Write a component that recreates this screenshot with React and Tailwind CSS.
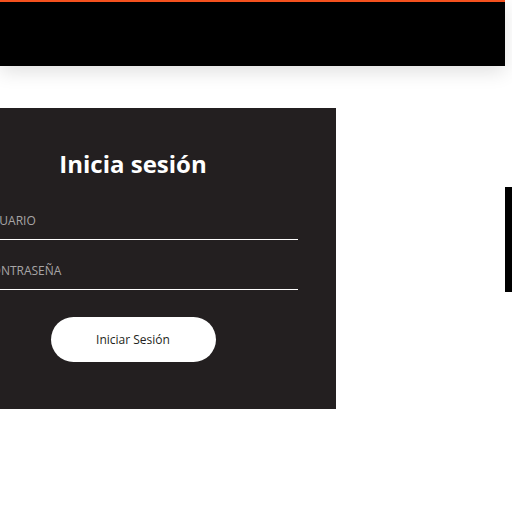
import React from 'react';

const Field = ({ label }) => (
  <div className="h-[50px] flex items-end border-b border-white pb-[11px]">
    <span className="pl-[16px] text-[12px] leading-[14px] text-[#a7a5a6]">{label}</span>
  </div>
);

export default function App() {
  return (
    <div className="relative w-[512px] h-[511px] overflow-hidden bg-white" style={{ fontFamily: '"Open Sans", Lato, sans-serif' }}>
      {/* Header */}
      <header className="w-[505px] h-[66px] bg-black border-t-2 border-[#f4511e] shadow-[0_6px_18px_rgba(0,0,0,0.12)]" />

      {/* Login panel */}
      <div className="mt-[42px] -ml-[70px] w-[406px] h-[301px] bg-[#231f20] px-[38px] pt-[38px]">
        <h1 className="text-center text-white font-bold text-[24px] leading-[36px]">Inicia sesión</h1>
        <div className="mt-[8px] flex flex-col">
          <Field label="USUARIO" />
          <Field label="CONTRASEÑA" />
        </div>
        <div className="mt-[27px] flex justify-center">
          <button className="w-[165px] h-[45px] rounded-full bg-white text-[12px] text-[#231f20]">
            Iniciar Sesión
          </button>
        </div>
      </div>

      {/* side tab */}
      <div className="absolute right-0 top-[187px] w-[7px] h-[105px] bg-black" />
    </div>
  );
}
